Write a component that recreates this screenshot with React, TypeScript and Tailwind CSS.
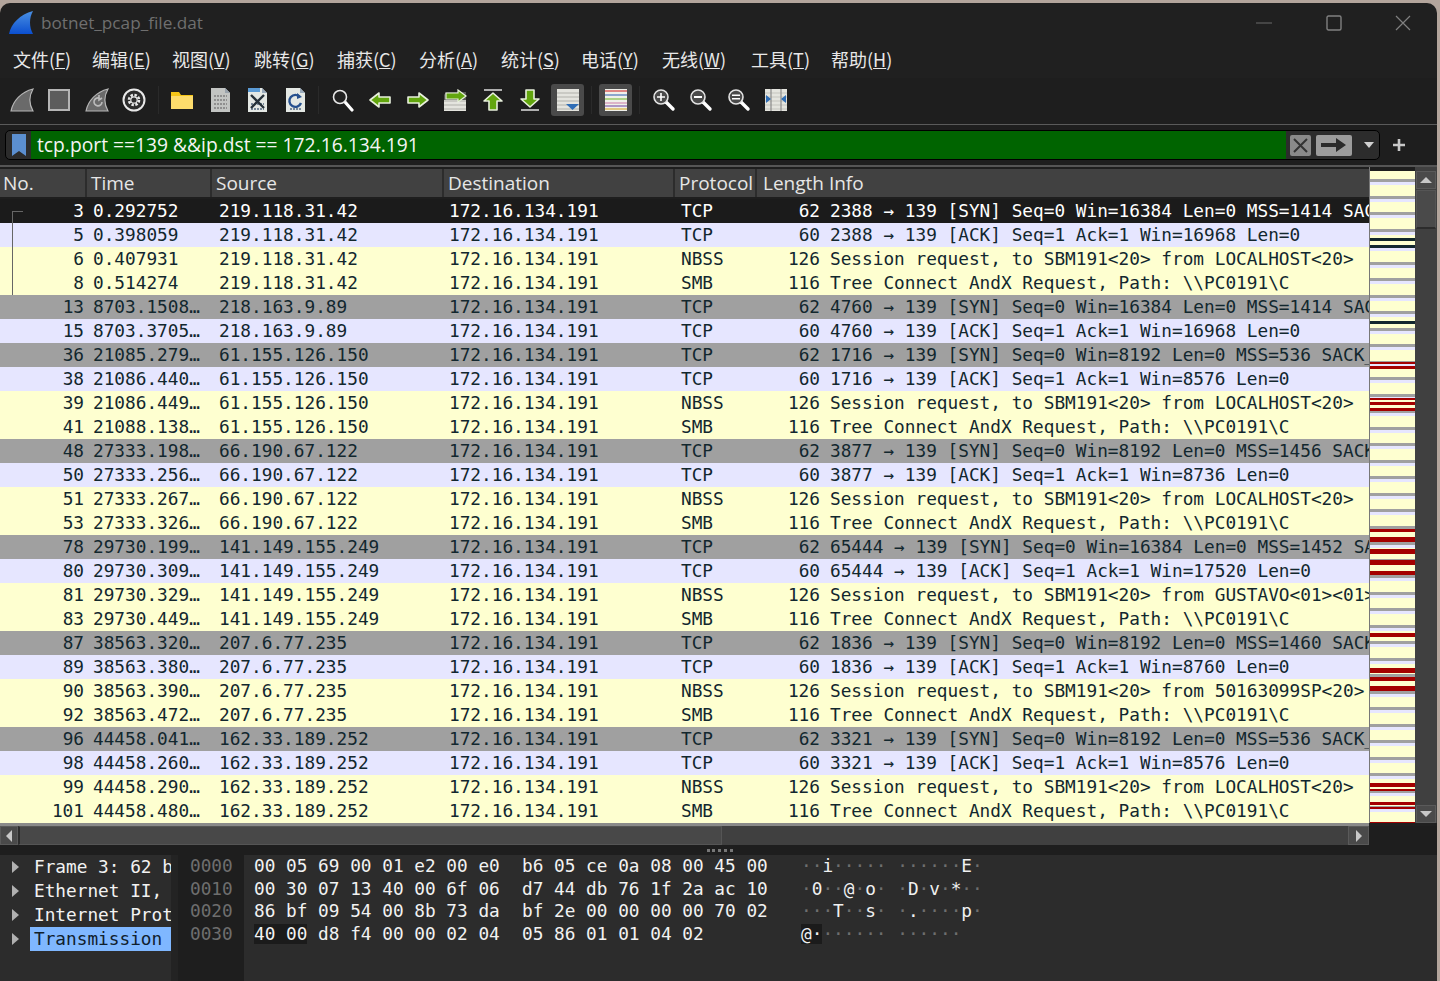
import React from "react";

type Kind = "syn" | "ack" | "smb" | "sel";

const packets: [Kind, string, string, string, string, string, string][] = [
  ["sel", "3", "0.292752", "219.118.31.42", "TCP", "62", "2388 → 139 [SYN] Seq=0 Win=16384 Len=0 MSS=1414 SACK_PERM"],
  ["ack", "5", "0.398059", "219.118.31.42", "TCP", "60", "2388 → 139 [ACK] Seq=1 Ack=1 Win=16968 Len=0"],
  ["smb", "6", "0.407931", "219.118.31.42", "NBSS", "126", "Session request, to SBM191<20> from LOCALHOST<20>"],
  ["smb", "8", "0.514274", "219.118.31.42", "SMB", "116", "Tree Connect AndX Request, Path: \\\\PC0191\\C"],
  ["syn", "13", "8703.1508…", "218.163.9.89", "TCP", "62", "4760 → 139 [SYN] Seq=0 Win=16384 Len=0 MSS=1414 SACK_PERM"],
  ["ack", "15", "8703.3705…", "218.163.9.89", "TCP", "60", "4760 → 139 [ACK] Seq=1 Ack=1 Win=16968 Len=0"],
  ["syn", "36", "21085.279…", "61.155.126.150", "TCP", "62", "1716 → 139 [SYN] Seq=0 Win=8192 Len=0 MSS=536 SACK_PERM"],
  ["ack", "38", "21086.440…", "61.155.126.150", "TCP", "60", "1716 → 139 [ACK] Seq=1 Ack=1 Win=8576 Len=0"],
  ["smb", "39", "21086.449…", "61.155.126.150", "NBSS", "126", "Session request, to SBM191<20> from LOCALHOST<20>"],
  ["smb", "41", "21088.138…", "61.155.126.150", "SMB", "116", "Tree Connect AndX Request, Path: \\\\PC0191\\C"],
  ["syn", "48", "27333.198…", "66.190.67.122", "TCP", "62", "3877 → 139 [SYN] Seq=0 Win=8192 Len=0 MSS=1456 SACK_PERM"],
  ["ack", "50", "27333.256…", "66.190.67.122", "TCP", "60", "3877 → 139 [ACK] Seq=1 Ack=1 Win=8736 Len=0"],
  ["smb", "51", "27333.267…", "66.190.67.122", "NBSS", "126", "Session request, to SBM191<20> from LOCALHOST<20>"],
  ["smb", "53", "27333.326…", "66.190.67.122", "SMB", "116", "Tree Connect AndX Request, Path: \\\\PC0191\\C"],
  ["syn", "78", "29730.199…", "141.149.155.249", "TCP", "62", "65444 → 139 [SYN] Seq=0 Win=16384 Len=0 MSS=1452 SACK_PERM"],
  ["ack", "80", "29730.309…", "141.149.155.249", "TCP", "60", "65444 → 139 [ACK] Seq=1 Ack=1 Win=17520 Len=0"],
  ["smb", "81", "29730.329…", "141.149.155.249", "NBSS", "126", "Session request, to SBM191<20> from GUSTAVO<01><01>"],
  ["smb", "83", "29730.449…", "141.149.155.249", "SMB", "116", "Tree Connect AndX Request, Path: \\\\PC0191\\C"],
  ["syn", "87", "38563.320…", "207.6.77.235", "TCP", "62", "1836 → 139 [SYN] Seq=0 Win=8192 Len=0 MSS=1460 SACK_PERM"],
  ["ack", "89", "38563.380…", "207.6.77.235", "TCP", "60", "1836 → 139 [ACK] Seq=1 Ack=1 Win=8760 Len=0"],
  ["smb", "90", "38563.390…", "207.6.77.235", "NBSS", "126", "Session request, to SBM191<20> from 50163099SP<20>"],
  ["smb", "92", "38563.472…", "207.6.77.235", "SMB", "116", "Tree Connect AndX Request, Path: \\\\PC0191\\C"],
  ["syn", "96", "44458.041…", "162.33.189.252", "TCP", "62", "3321 → 139 [SYN] Seq=0 Win=8192 Len=0 MSS=536 SACK_PERM"],
  ["ack", "98", "44458.260…", "162.33.189.252", "TCP", "60", "3321 → 139 [ACK] Seq=1 Ack=1 Win=8576 Len=0"],
  ["smb", "99", "44458.290…", "162.33.189.252", "NBSS", "126", "Session request, to SBM191<20> from LOCALHOST<20>"],
  ["smb", "101", "44458.480…", "162.33.189.252", "SMB", "116", "Tree Connect AndX Request, Path: \\\\PC0191\\C"],
];

const rowClass: Record<Kind, string> = {
  sel: "bg-[#1b1b1b] text-white",
  syn: "bg-[#a0a0a0] text-[#12272e]",
  ack: "bg-[#e6e6ff] text-[#12272e]",
  smb: "bg-[#feffd0] text-[#12272e]",
};

const menus: [string, string, string][] = [
  ["文件", "F", "w-[79px]"], ["编辑", "E", "w-[80px]"], ["视图", "V", "w-[82px]"], ["跳转", "G", "w-[83px]"],
  ["捕获", "C", "w-[82px]"], ["分析", "A", "w-[82px]"], ["统计", "S", "w-[80px]"], ["电话", "Y", "w-[81px]"],
  ["无线", "W", "w-[89px]"], ["工具", "T", "w-[80px]"], ["帮助", "H", "w-[80px]"],
];

// [y from top of the map, height, colour]
const marks: [number, number, string][] = [
  [67, 3, "#12272e"], [74, 3, "#12272e"], [150, 3, "#12272e"],
  [191, 2, "#a40000"], [195, 3, "#a40000"], [227, 2, "#a40000"], [231, 3, "#a40000"], [237, 3, "#a40000"],
  [358, 3, "#a40000"], [366, 5, "#a40000"], [378, 5, "#a40000"], [389, 5, "#a40000"], [400, 4, "#a40000"],
  [462, 4, "#a40000"], [497, 5, "#a40000"], [506, 4, "#a40000"], [515, 5, "#a40000"],
  [612, 4, "#a40000"], [618, 2, "#a40000"], [631, 3, "#a40000"], [636, 2, "#a40000"], [651, 1, "#a40000"],
];

function Minimap() {
  const bands: React.ReactNode[] = [];
  for (let i = 0; i < 40; i++) {
    const y = Math.round(i * 16.5);
    bands.push(<rect key={"g" + i} x="0" y={y + 8} width="45" height="3" fill="#a0a0a0" />);
    bands.push(<rect key={"l" + i} x="0" y={y + 11} width="45" height="3" fill="#e6e6ff" />);
  }
  return (
    <svg width="45" height="652" shapeRendering="crispEdges" className="block">
      <rect width="45" height="652" fill="#feffd0" />
      {bands}
      {marks.map(([y, h, c]) => (
        <rect key={y} x="0" y={y} width="45" height={h} fill={c} />
      ))}
    </svg>
  );
}

const Fin = ({ children }: { children?: React.ReactNode }) => (
  <svg width="24" height="24" viewBox="0 0 24 24">
    <path d="M1 23C3 13 11 4 23 1C19 8 19 16 23 23Z" fill="#6a6a6a" stroke="#b5b5b5" strokeWidth="1.2" />
    {children}
  </svg>
);

const Doc = ({ children }: { children?: React.ReactNode }) => (
  <svg width="24" height="26" viewBox="0 0 24 26">
    <path d="M3 1H17L22 6V25H3Z" fill="#e4e8e4" />
    <path d="M17 1V6H22Z" fill="#9ab" />
    {children}
  </svg>
);

const Lens = ({ sign }: { sign?: string }) => (
  <svg width="24" height="24" viewBox="0 0 24 24">
    <path d="M14 14L21 21" stroke="#fff" strokeWidth="3.4" strokeLinecap="round" />
    <circle cx="9" cy="9" r="7" fill="#4a4a4a" stroke="#e4e4e4" strokeWidth="1.6" />
    {sign === "plus" && <path d="M5 9H13M9 5V13" stroke="#fff" strokeWidth="1.6" />}
    {sign === "minus" && <path d="M5 9H13" stroke="#fff" strokeWidth="1.8" />}
    {sign === "equal" && <path d="M5 7.3H13M5 10.7H13" stroke="#fff" strokeWidth="1.5" />}
  </svg>
);

const Arrow = ({ d }: { d: string }) => (
  <svg width="24" height="24" viewBox="0 0 24 24">
    <path d={d} fill="#62a60e" stroke="#e8f0dc" strokeWidth="1.6" strokeLinejoin="round" />
  </svg>
);

const Lines = ({ children }: { children?: React.ReactNode }) => (
  <svg width="24" height="22" viewBox="0 0 24 22">
    <rect x="1" y="0" width="22" height="22" fill="#e4e4de" />
    <path d="M1 4H23M1 8H23M1 12H23M1 16H23M1 20H23" stroke="#b0b0aa" strokeWidth="1" />
    {children}
  </svg>
);

const Tool = ({ children, active }: { children: React.ReactNode; active?: boolean }) => (
  <div className="w-[37.5px] h-[34px] flex items-center justify-center shrink-0">
    <div className={active ? "w-[33px] h-[32px] rounded-[3px] bg-[#4a4a4a] flex items-center justify-center" : "flex items-center justify-center"}>
      {children}
    </div>
  </div>
);

const Sep = () => (
  <div className="w-[10.5px] h-[28px] flex justify-center shrink-0">
    <div className="w-px h-full bg-[#2a2a2a]" />
  </div>
);

function Toolbar() {
  return (
    <div className="h-[46px] flex items-center pl-[3px] pb-[2px] bg-[#1e1e1e]">
      <Tool><Fin /></Tool>
      <Tool>
        <svg width="22" height="22"><rect x="1" y="1" width="20" height="20" fill="#5c5c5c" stroke="#b5b5b5" strokeWidth="2" /></svg>
      </Tool>
      <Tool>
        <Fin><path d="M17 14A4 4 0 1 1 14 10M14 7V12L17 10" fill="none" stroke="#bbb" strokeWidth="1.6" /></Fin>
      </Tool>
      <Tool>
        <svg width="24" height="24" viewBox="0 0 24 24">
          <circle cx="12" cy="12" r="10.5" fill="#2c2c2c" stroke="#e8e8e8" strokeWidth="2" />
          <circle cx="12" cy="12" r="5" fill="none" stroke="#e8e8e8" strokeWidth="2.6" strokeDasharray="2.4 1.5" />
          <circle cx="12" cy="12" r="3.2" fill="none" stroke="#e8e8e8" strokeWidth="1.2" />
        </svg>
      </Tool>
      <Sep />
      <Tool>
        <svg width="24" height="20" viewBox="0 0 24 20">
          <path d="M1 2H9L11 5H23V19H1Z" fill="#f5c518" />
          <path d="M1 6H23V19H1Z" fill="#fddc6c" />
        </svg>
      </Tool>
      <Tool>
        <Doc>
          <path d="M6 9H19M6 13H19M6 17H19M6 21H19" stroke="#888" strokeWidth="2" strokeDasharray="2 1" />
          <path d="M3 1H17L22 6V25H3Z" fill="#999" fillOpacity="0.45" />
        </Doc>
      </Tool>
      <Tool>
        <Doc>
          <path d="M6 17H19M6 22H19" stroke="#789" strokeWidth="2" strokeDasharray="2 1" />
          <path d="M6 8L19 21M19 8L6 21" stroke="#26313a" strokeWidth="2.4" />
          <path d="M3 1H15V5H3Z" fill="#5b9bd5" />
        </Doc>
      </Tool>
      <Tool>
        <Doc>
          <path d="M7 22H19" stroke="#789" strokeWidth="2" strokeDasharray="2 1" />
          <path d="M17 10A6 6 0 1 0 18 16" fill="none" stroke="#27518f" strokeWidth="2.4" />
          <path d="M14 6L19 10L14 12Z" fill="#27518f" />
        </Doc>
      </Tool>
      <Sep />
      <Tool>
        <svg width="24" height="24" viewBox="0 0 24 24">
          <path d="M14 14L21 22" stroke="#fff" strokeWidth="3.2" strokeLinecap="round" />
          <circle cx="9" cy="9" r="6.5" fill="#222" stroke="#e8e8e8" strokeWidth="1.6" />
        </svg>
      </Tool>
      <Tool><Arrow d="M2 12L11 5V9H22V15H11V19Z" /></Tool>
      <Tool><Arrow d="M22 12L13 5V9H2V15H13V19Z" /></Tool>
      <Tool>
        <Lines>
          <rect x="1" y="0" width="22" height="11" fill="#1e1e1e" />
          <path d="M1 6L3 3H23V11H1Z" fill="#e4e4de" fillOpacity="0.3" />
          <path d="M23 7L15 1V4H3V10H15V13Z" fill="#62a60e" stroke="#e8f0dc" strokeWidth="1.2" />
        </Lines>
      </Tool>
      <Tool>
        <svg width="24" height="24" viewBox="0 0 24 24">
          <path d="M3 2H21" stroke="#e0e0e0" strokeWidth="1.6" />
          <path d="M12 5L21 13H16V22H8V13H3Z" fill="#62a60e" stroke="#e8f0dc" strokeWidth="1.6" strokeLinejoin="round" />
        </svg>
      </Tool>
      <Tool>
        <svg width="24" height="24" viewBox="0 0 24 24">
          <path d="M3 22H21" stroke="#e0e0e0" strokeWidth="1.6" />
          <path d="M12 19L21 11H16V2H8V11H3Z" fill="#62a60e" stroke="#e8f0dc" strokeWidth="1.6" strokeLinejoin="round" />
        </svg>
      </Tool>
      <Tool active>
        <Lines>
          <path d="M10 15H23L16.5 21Z" fill="#2f6db5" />
        </Lines>
      </Tool>
      <Sep />
      <Tool active>
        <svg width="24" height="22" viewBox="0 0 24 22">
          <rect x="1" y="0" width="22" height="22" fill="#f0f0ea" />
          <path d="M1 2H23" stroke="#d01c1c" strokeWidth="1.2" />
          <path d="M1 6H23" stroke="#2a5db0" strokeWidth="1.2" />
          <path d="M1 10H23" stroke="#6bb324" strokeWidth="1.2" />
          <path d="M1 14H23" stroke="#c97ba8" strokeWidth="1.2" />
          <path d="M1 17H23" stroke="#6b3fa0" strokeWidth="1.2" />
          <path d="M1 20H23" stroke="#cfa01a" strokeWidth="1.2" />
        </svg>
      </Tool>
      <Sep />
      <Tool><Lens sign="plus" /></Tool>
      <Tool><Lens sign="minus" /></Tool>
      <Tool><Lens sign="equal" /></Tool>
      <Tool>
        <svg width="24" height="22" viewBox="0 0 24 22">
          <rect x="1" y="0" width="22" height="22" fill="#e4e4de" />
          <path d="M1 4H23M1 8H23M1 12H23M1 16H23M1 20H23" stroke="#c4c4be" strokeWidth="1" />
          <path d="M7 0V22M17 0V22" stroke="#8a8a8a" strokeWidth="1.2" />
          <path d="M2 6L7 10L2 14ZM22 6L17 10L22 14Z" fill="#2f6db5" />
        </svg>
      </Tool>
    </div>
  );
}

function FilterBar() {
  return (
    <div className="h-[40px] flex items-center pl-[5px] bg-[#1e1e1e]">
      <div className="w-[1375px] h-[30px] flex items-center rounded-[5px] border border-black bg-[#2c2c2c]">
        <div className="w-[25px] flex justify-center shrink-0">
          <svg width="14" height="22" viewBox="0 0 14 22">
            <path d="M0 0H14V22L7 17L0 22Z" fill="#5b8fd0" />
          </svg>
        </div>
        <div className="w-[1255px] h-full bg-[#006400] text-[#f4f4f4] text-[19.25px] leading-[28px] pl-[6px] font-['Open_Sans',sans-serif]">
          tcp.port ==139 &amp;&amp;ip.dst == 172.16.134.191
        </div>
        <div className="w-[21px] h-[21px] ml-[4px] rounded-[2px] bg-[#8a8a8a] flex items-center justify-center">
          <svg width="15" height="15" viewBox="0 0 15 15"><path d="M1 1L14 14M14 1L1 14" stroke="#333" strokeWidth="2" /></svg>
        </div>
        <div className="w-[36px] h-[21px] ml-[5px] rounded-[2px] bg-[#9c9c9c] flex items-center justify-center">
          <svg width="26" height="14" viewBox="0 0 26 14"><path d="M0 5H15V0L25 7L15 14V9H0Z" fill="#2b2b2b" /></svg>
        </div>
        <div className="ml-[11px]">
          <svg width="12" height="7" className="block"><path d="M1 0H11L6 6Z" fill="#d0d0d0" /></svg>
        </div>
      </div>
      <svg width="12" height="12" viewBox="0 0 12 12" className="ml-[13px]">
        <path d="M6 0V12M0 6H12" stroke="#c8c8c8" strokeWidth="2.6" />
      </svg>
    </div>
  );
}

const headers: [string, string][] = [
  ["No.", "w-[87px] pl-[3px]"], ["Time", "w-[125px] pl-[4px]"], ["Source", "w-[232px] pl-[4px]"],
  ["Destination", "w-[231px] pl-[4px]"], ["Protocol", "w-[82px] pl-[4px]"],
];

function PacketList() {
  return (
    <div className="w-[1369px] relative">
      <div className="h-[32px] bg-[#1e1e1e] pt-[2px]">
        <div className="h-[28px] flex bg-[#414141] text-[#e6e6e6] text-[19px] leading-[28px] font-['Open_Sans',sans-serif]">
          {headers.map(([label, width]) => (
            <div key={label} className={`${width} border-r-2 border-[#2c2c2c] whitespace-nowrap overflow-hidden shrink-0`}>
              {label}
            </div>
          ))}
          <div className="pl-[6px] whitespace-nowrap">Length Info</div>
        </div>
      </div>
      {packets.map(([kind, no, time, src, proto, len, info]) => (
        <div key={no} className={`${rowClass[kind]} h-6 flex whitespace-pre overflow-hidden text-[17.75px] leading-[24px] font-['DejaVu_Sans_Mono',monospace]`}>
          <div className="w-[85px] shrink-0 text-right pr-px">{no}</div>
          <div className="w-[125px] shrink-0 pl-[8px]">{time}</div>
          <div className="w-[232px] shrink-0 pl-[9px]">{src}</div>
          <div className="w-[231px] shrink-0 pl-[7px]">172.16.134.191</div>
          <div className="w-[75px] shrink-0 pl-[8px]">{proto}</div>
          <div className="w-[72px] shrink-0 text-right">{len}</div>
          <div className="pl-[10px]">{info}</div>
        </div>
      ))}
      <div className="absolute left-[12px] top-[44px] w-[11px] h-[84px] border-l border-t border-[#666]" />
    </div>
  );
}

const ScrollBtn = ({ d, className }: { d: string; className: string }) => (
  <div className={`${className} bg-[#4a4a4a] border border-[#5a5a5a] flex items-center justify-center shrink-0`}>
    <svg width="14" height="14" viewBox="0 0 14 14"><path d={d} fill="#c8c8c8" /></svg>
  </div>
);

const hexRows = [
  { off: "0000", a: "00 05 69 00 01 e2 00 e0", b: "b6 05 ce 0a 08 00 45 00", c: "··i····· ······E·" },
  { off: "0010", a: "00 30 07 13 40 00 6f 06", b: "d7 44 db 76 1f 2a ac 10", c: "·0··@·o· ·D·v·*··" },
  { off: "0020", a: "86 bf 09 54 00 8b 73 da", b: "bf 2e 00 00 00 00 70 02", c: "···T··s· ·.····p·" },
  { off: "0030", a: "40 00 d8 f4 00 00 02 04", b: "05 86 01 01 04 02", c: "@······· ······" },
];

function Ascii({ text, first }: { text: string; first: boolean }) {
  return (
    <div className="w-[200px] pl-[29px]">
      {text.split("").map((ch, i) => (
        <span key={i} className={`${ch === "·" && !(first && i === 1) ? "text-[#6e6e6e]" : "text-[#f0f0f0]"} ${first && i < 2 ? "bg-[#1b1b1b]" : ""}`}>
          {ch}
        </span>
      ))}
    </div>
  );
}

function DetailPanes() {
  const tree = ["Frame 3: 62 b", "Ethernet II,", "Internet Prot", "Transmission"];
  return (
    <div className="flex-1 flex bg-[#232323] text-[17.75px] font-['DejaVu_Sans_Mono',monospace] whitespace-pre">
      <div className="w-[171px] bg-[#2c2c2c] shrink-0 overflow-hidden">
        {tree.map((t, i) => (
          <div key={t} className="h-6 leading-[24px] flex items-center">
            <div className="w-[30px] pl-[12px] shrink-0">
              <svg width="7" height="12" className="block"><path d="M0 0L7 6L0 12Z" fill="#b0b0b0" /></svg>
            </div>
            <div className={i === 3 ? "flex-1 pl-[4px] bg-[#7fb7ff] text-[#10202c] overflow-hidden" : "flex-1 pl-[4px] text-[#f2f2f2] overflow-hidden"}>{t}</div>
          </div>
        ))}
      </div>
      <div className="w-[7px] shrink-0" />
      <div className="flex-1 flex">
        <div className="w-[66px] bg-[#1e1e1e] pl-[12px] text-[#6e6e6e] shrink-0">
          {hexRows.map((r) => (
            <div key={r.off} className="h-[22.6px] leading-[22.6px]">{r.off}</div>
          ))}
        </div>
        <div className="flex-1 bg-[#2c2c2c] text-[#f2f2f2]">
          {hexRows.map((r, i) => (
            <div key={r.off} className="h-[22.6px] leading-[22.6px] flex pl-[10px]">
              <div className="w-[268px] shrink-0">
                <span className={i === 3 ? "bg-[#1b1b1b]" : ""}>{r.a.slice(0, 5)}</span>
                {r.a.slice(5)}
              </div>
              <div className="w-[250px] shrink-0">{r.b}</div>
              <Ascii text={r.c} first={i === 3} />
            </div>
          ))}
        </div>
      </div>
    </div>
  );
}

export default function App() {
  return (
    <div className="w-[1440px] h-[981px] overflow-hidden bg-[#b3a59c] pt-[3px] pr-[3px]">
      <div className="h-full flex flex-col rounded-t-[10px] overflow-hidden bg-[#202020]">
        {/* title bar */}
        <div className="h-[39px] shrink-0 flex items-center pl-[9px] text-[#6f6f6f] text-[17.2px] font-['Open_Sans',sans-serif]">
          <svg width="24" height="24" viewBox="0 0 24 24">
            <defs>
              <linearGradient id="shark" x1="0" y1="0" x2="0" y2="1">
                <stop offset="0" stopColor="#4a90e2" />
                <stop offset="1" stopColor="#0b4fd0" />
              </linearGradient>
            </defs>
            <path d="M0 23C2 13 11 3 24 0C20 7 20 16 24 23Z" fill="url(#shark)" />
          </svg>
          <span className="ml-[8px]">botnet_pcap_file.dat</span>
          <div className="ml-auto flex items-center gap-[53.5px] pr-[26px]">
            <svg width="16" height="2"><path d="M0 1H16" stroke="#6a6a6a" /></svg>
            <svg width="16" height="16"><rect x="1" y="1" width="14" height="14" rx="1.5" fill="none" stroke="#808080" strokeWidth="1.4" /></svg>
            <svg width="16" height="16"><path d="M1 1L15 15M15 1L1 15" stroke="#808080" strokeWidth="1.2" /></svg>
          </div>
        </div>
        {/* menu */}
        <div className="h-[36px] shrink-0 flex items-center pl-[13px] pb-[1px] text-[#e8e8e8] text-[18px] font-['Noto_Sans_CJK_SC',sans-serif]">
          {menus.map(([label, key, width]) => (
            <span key={key} className={`${width} shrink-0 whitespace-nowrap`}>
              {label}(<span className="underline">{key}</span>)
            </span>
          ))}
        </div>
        <Toolbar />
        <div className="h-px shrink-0 bg-[#5a5a5a]" />
        <FilterBar />
        <div className="h-[2px] shrink-0 bg-[#555]" />
        {/* packet list with scrollbar and map */}
        <div className="h-[656px] shrink-0 flex bg-[#1e1e1e]">
          <PacketList />
          <div className="w-px bg-[#777] shrink-0" />
          <div className="pt-[4px] shrink-0"><Minimap /></div>
          <div className="w-[22px] pl-[1px] pr-px pt-[4px] flex flex-col bg-[#404040]">
            <ScrollBtn className="w-[20px] h-[18px]" d="M7 4L13 10H1Z" />
            <div className="h-[39px] mt-[1px] bg-[#4a4a4a] border border-[#555] border-b-2 border-b-[#2c2c2c]" />
            <div className="flex-1" />
            <ScrollBtn className="w-[20px] h-[18px]" d="M7 10L13 4H1Z" />
          </div>
        </div>
        {/* horizontal scrollbar */}
        <div className="h-[3px] w-[1369px] shrink-0 bg-[#8a8a8a]" />
        <div className="h-[19px] shrink-0 flex bg-[#1e1e1e]">
          <div className="w-[1369px] flex bg-[#404040]">
            <ScrollBtn className="w-[18px] h-full" d="M4 7L10 1V13Z" />
            <div className="w-[704px] bg-[#484848] border border-[#555] border-l-2 border-l-[#2c2c2c]" />
            <div className="flex-1" />
            <ScrollBtn className="w-[21px] h-full" d="M10 7L4 1V13Z" />
          </div>
        </div>
        <div className="h-[10px] shrink-0 bg-[#1e1e1e] flex items-center pl-[707px]">
          <div className="w-[26px] h-[3px] border-t-[3px] border-dotted border-[#777]" />
        </div>
        <DetailPanes />
      </div>
    </div>
  );
}
